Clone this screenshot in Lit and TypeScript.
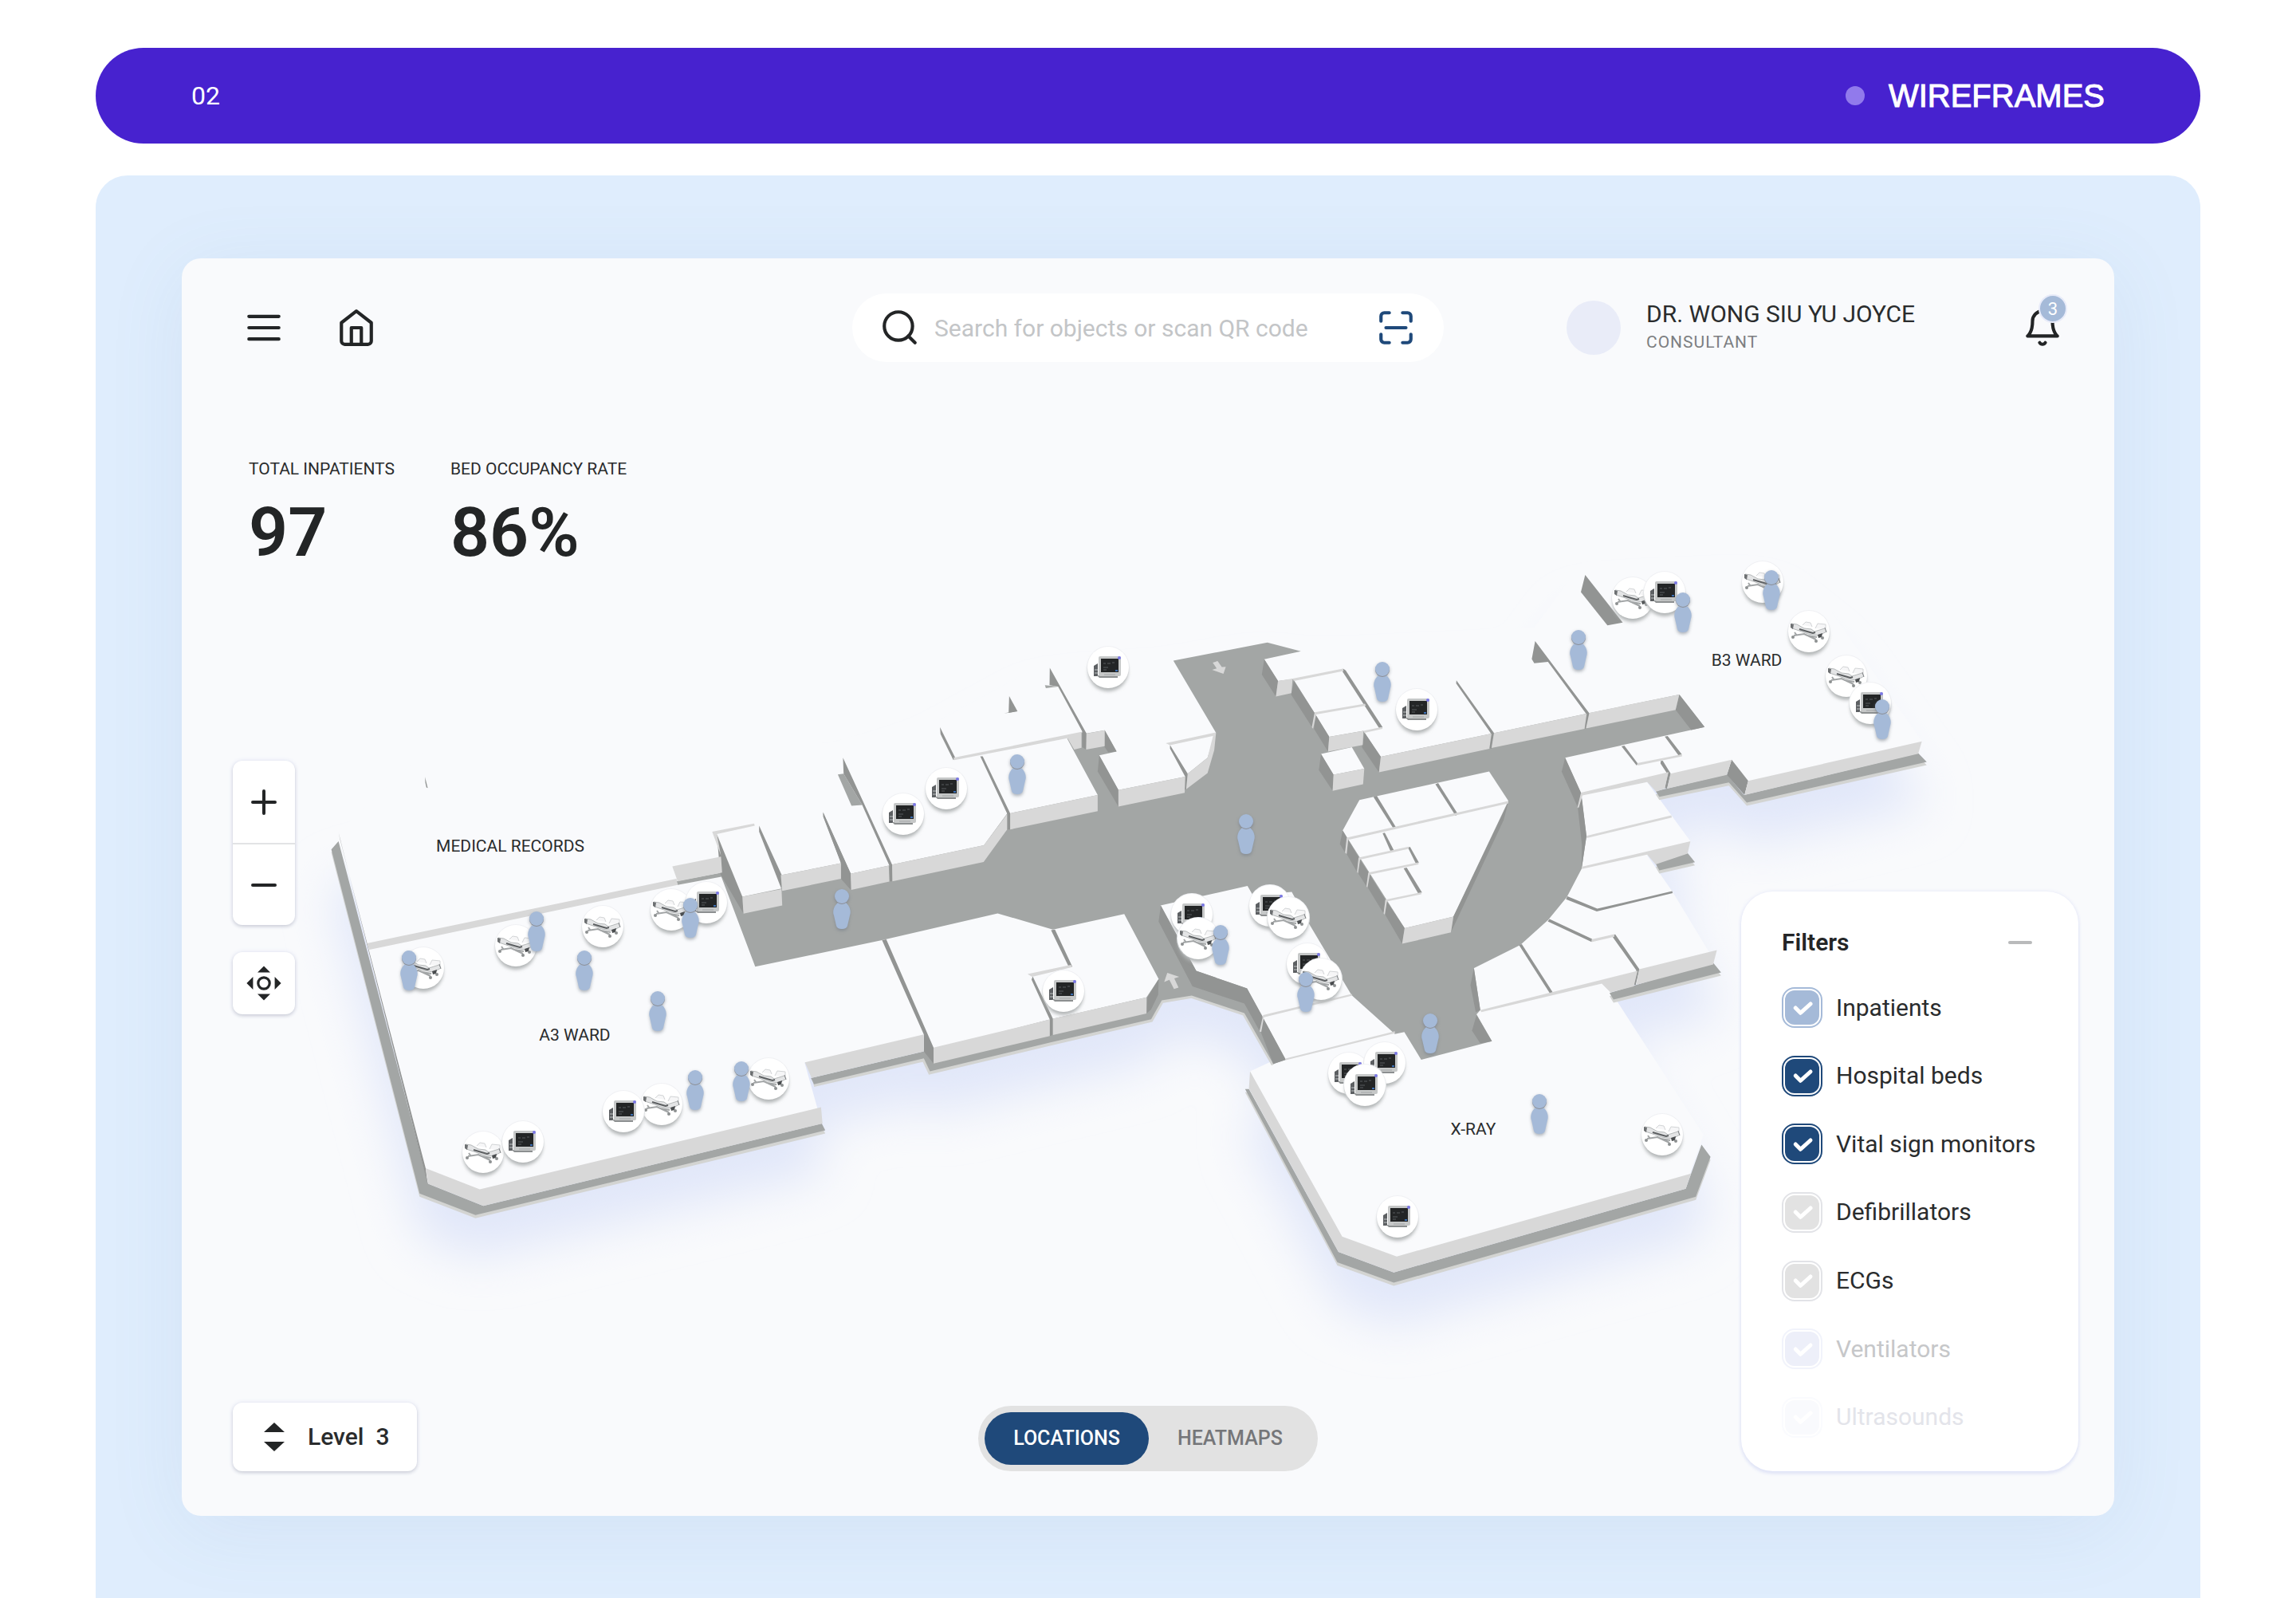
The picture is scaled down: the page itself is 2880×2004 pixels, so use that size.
import { LitElement, html, svg, css } from "lit";
import { customElement, property, state } from "lit/decorators.js";
import { classMap } from "lit/directives/class-map.js";

type Pts = number[];

/* Each part of the building is plotted on its own survey sheet; a sheet
   converts its local points to floor-plan coordinates. */
const sheet =
  (ox: number, oy: number, sx: number, sy: number) =>
  (...p: Pts): string => {
    const out: string[] = [];
    for (let i = 0; i < p.length; i += 2) {
      out.push(`${(ox + p[i] * sx).toFixed(1)},${(oy + p[i + 1] * sy).toFixed(1)}`);
    }
    return out.join(" ") + " ";
  };

const W = sheet(400, 900, 0.4464, 0.4082);
const N = sheet(1000, 780, 0.38265, 0.38265);
const M = sheet(1450, 680, 0.38265, 0.35714);
const E = sheet(1900, 680, 0.35714, 0.40816);
const S = sheet(1450, 1080, 0.47194, 0.35714);

const FOOTPRINT =
  W(35, 405, 283, 1462, 440, 1528, 1423, 1268, 1390, 1127) +
  N(415, 1432, 435, 1475, 830, 1380, 1160, 1302, 1195, 1240, 1300, 1220, 1465, 1278) +
  S(312, 712, 237, 800, 482, 1408, 632, 1480, 1435, 1178, 1474, 1040, 1222, 487, 1500, 390) +
  E(600, 1080, 508, 1008, 632, 983, 508, 780, 752, 738, 815, 802, 1447, 675, 1100, 250, 850, 75, 240, 100) +
  M(1240, 345, 470, 383, 365, 352, 58, 413) +
  N(828, 150, 470, 345, 150, 445) +
  W(900, 130, 57, 380);

const TOPS =
  W(55, 352, 305, 1430, 452, 1490, 1411, 1240, 1365, 1060) +
  N(415, 1400, 447, 1440, 830, 1350, 1160, 1270, 1195, 1200, 1300, 1200, 1465, 1240) +
  S(312, 700, 250, 738, 490, 1360, 632, 1430, 1408, 1140, 1455, 960, 1210, 460, 1482, 345) +
  E(555, 1075, 465, 962, 607, 952, 617, 919, 465, 737, 745, 700, 807, 770, 1417, 645, 1430, 612, 1100, 200, 850, 40, 240, 60) +
  M(1240, 300, 470, 340, 365, 340, 58, 390) +
  N(828, 130, 470, 320, 150, 380) +
  W(1455, 80, 900, 60, 300, 100);

const CORRIDOR =
  W(1226, 765, 1128, 480, 1190, 550, 1300, 525, 1298, 484, 1467, 447) +
  N(143, 788, 175, 825, 300, 798, 311, 795, 612, 732, 688, 628, 698, 627, 985, 567, 885, 382, 932, 362,
    948, 365, 1008, 355, 1047, 425, 990, 437, 1053, 551, 1272, 507, 1280, 497, 1345, 445, 1372, 362, 1233, 127) +
  M(365, 352, 475, 383, 355, 411, 400, 487, 450, 480, 520, 600, 568, 683, 680, 662, 737, 753, 1100, 672, 1420, 600) +
  E(578, 468, 667, 568, 177, 662, 233, 772, 252, 903, 235, 1003, 183, 1090, 118, 1160, 20, 1237) +
  M(1043, 1495) +
  S(845, 375, 862, 523, 852, 538, 893, 632, 705, 697, 660, 600, 635, 607, 520, 470) +
  M(505, 1345, 445, 1228, 318, 1240, 300, 1207, 15, 1275) +
  S(107, 385, 242, 447, 283, 547, 345, 697, 312, 712, 235, 533, 95, 472) +
  N(1195, 1240, 1160, 1302, 830, 1378, 435, 1473, 415, 1430, 55, 1515, 45, 1495, 415, 1407, 447, 1400, 828, 1303,
    1145, 1230, 1185, 1170, 1072, 957, 838, 1008, 657, 955, 278, 1043);

const CORRIDOR_RIM =
  N(54, 1517, 415, 1434, 435, 1476, 830, 1382, 1160, 1305, 1195, 1243) + S(95, 474, 235, 536, 312, 714);

const SLABS = [
  W(35, 405, 55, 380, 307, 1432, 462, 1500, 1413, 1247, 1423, 1268, 440, 1528, 283, 1462),
  S(237, 800, 247, 800, 485, 1372, 632, 1444, 1408, 1150, 1450, 995, 1474, 1038, 1435, 1178, 632, 1480, 482, 1408),
  E(333, 1385, 695, 1290, 725, 1322, 347, 1405),
  E(495, 988, 607, 955, 633, 983, 508, 1008),
  E(495, 765, 745, 713, 805, 777, 1417, 648, 1447, 675, 815, 800, 752, 738, 508, 782),
];

const FLOOR = [
  N(133, 500, 152, 497, 213, 600, 178, 602),
  N(812, 207, 855, 212, 815, 217),
  N(678, 300, 695, 295, 722, 293),
  W(1005, 502, 1132, 476, 1134, 488, 1008, 514),
];

const ISLANDS = [
  M(667, 905, 1092, 805, 1155, 908, 975, 1315, 815, 1355, 612, 1012),
  M(541, 743, 642, 720, 683, 795, 582, 816),
];

const SHADED = [
  W(55, 352, 305, 1430, 300, 1384, 60, 376),
  W(298, 182, 306, 216, 302, 214, 299, 200),
  W(1118, 358, 1190, 550, 1193, 602, 1128, 480),
  W(1237, 332, 1300, 482, 1300, 527, 1237, 350),
  W(1417, 290, 1495, 480, 1495, 530, 1467, 495, 1467, 447, 1417, 304),
  N(150, 445, 311, 795, 312, 850, 302, 850, 302, 798, 213, 600, 152, 497),
  N(85, 625, 175, 825, 177, 878, 145, 842, 143, 788, 87, 640),
  N(468, 345, 518, 445, 512, 453, 470, 368),
  N(600, 440, 608, 440, 698, 627, 698, 680, 688, 680, 688, 628),
  N(828, 150, 948, 365, 947, 418, 934, 410, 934, 358, 855, 212, 827, 207),
  N(695, 243, 722, 293, 693, 298),
  N(1008, 355, 1047, 424, 1020, 428, 1006, 407),
  N(990, 437, 1053, 551, 1053, 605, 985, 490),
  N(1222, 403, 1280, 497, 1275, 548, 1270, 550, 1272, 507, 1222, 415),
  N(278, 1043, 292, 1040, 447, 1395, 447, 1447, 415, 1407, 415, 1352),
  N(832, 1010, 845, 1008, 902, 1130, 890, 1130),
  N(768, 1172, 772, 1162, 838, 1300, 838, 1353, 828, 1357, 828, 1303),
  N(1185, 1170, 1183, 1222, 1160, 1270, 1145, 1283, 1148, 1230),
  S(13, 155, 107, 385, 242, 447, 283, 545, 276, 598, 235, 500, 97, 440, 7, 212),
  S(285, 550, 345, 697, 312, 712, 278, 598),
  M(355, 411, 400, 487, 393, 542, 347, 465),
  M(452, 487, 520, 600, 515, 655, 443, 535),
  M(524, 607, 568, 683, 564, 735, 518, 655),
  M(613, 444, 622, 450, 743, 650, 733, 655, 612, 455),
  M(684, 669, 737, 753, 731, 808, 675, 720),
  M(541, 743, 582, 816, 579, 873, 534, 800),
  M(985, 485, 1108, 670, 1100, 725, 1092, 722, 1097, 670, 984, 496),
  M(1243, 347, 1420, 600, 1412, 655, 1403, 655, 1410, 602, 1285, 420, 1240, 425, 1232, 410),
  M(1407, 115, 1530, 282, 1480, 292, 1393, 175),
  E(578, 468, 667, 568, 620, 577, 565, 515),
  E(177, 662, 233, 770, 222, 815, 165, 705),
  E(235, 780, 252, 903, 235, 1003, 236, 930, 222, 820),
  E(375, 627, 385, 625, 432, 680, 428, 686),
  E(527, 597, 537, 595, 587, 652, 575, 655),
  E(513, 672, 520, 671, 548, 711, 535, 757, 527, 755, 537, 713, 512, 680),
  E(762, 668, 820, 733, 807, 777, 745, 715),
  M(612, 1012, 626, 1038, 620, 1090, 603, 1060),
  M(630, 1045, 665, 1107, 659, 1158, 625, 1095),
  M(669, 1115, 697, 1160, 690, 1208, 664, 1165),
  M(701, 1168, 752, 1255, 746, 1303, 694, 1212),
  M(757, 1262, 815, 1355, 807, 1410, 751, 1308),
  M(713, 895, 724, 890, 788, 1003, 780, 1008),
  M(916, 850, 925, 846, 990, 955, 982, 960),
  M(743, 1022, 750, 1020, 780, 1082, 770, 1087),
  M(826, 1072, 833, 1070, 862, 1125, 852, 1128),
  M(812, 1145, 822, 1142, 872, 1230, 860, 1234),
  M(1155, 912, 1140, 975, 967, 1370, 975, 1315),
  E(185, 1088, 290, 1126, 553, 1072, 555, 1078, 288, 1134, 180, 1097),
  E(122, 1158, 272, 1219, 270, 1228, 116, 1165),
  E(345, 1207, 353, 1205, 438, 1312, 425, 1360, 415, 1360, 427, 1315, 345, 1214),
  E(15, 1238, 25, 1235, 135, 1385, 125, 1388),
  S(845, 375, 862, 523, 850, 530, 836, 435),
  S(852, 540, 893, 632, 862, 640, 840, 595),
];

const LIT_FACES = [
  W(135, 693, 1005, 495, 1008, 514, 142, 713),
  W(993, 457, 1130, 427, 1133, 476, 1008, 503),
  W(1105, 350, 1223, 325, 1225, 332, 1118, 358, 1130, 424),
  W(1190, 550, 1300, 527, 1302, 577, 1193, 602),
  W(1298, 484, 1467, 447, 1467, 495, 1302, 532),
  W(300, 1384, 452, 1449, 1411, 1197, 1415, 1247, 462, 1500, 307, 1432),
  N(175, 825, 300, 798, 302, 851, 177, 878),
  N(311, 795, 612, 732, 688, 630, 688, 680, 611, 787, 312, 850),
  N(698, 627, 985, 567, 985, 620, 698, 680),
  N(512, 445, 932, 360, 932, 412, 908, 418, 886, 381, 515, 453),
  N(948, 366, 1008, 355, 1008, 407, 947, 418),
  N(1053, 551, 1272, 507, 1270, 560, 1053, 605),
  N(1208, 397, 1372, 362, 1365, 373, 1222, 404),
  N(1280, 497, 1345, 445, 1363, 373, 1373, 362, 1367, 420, 1345, 495, 1275, 548),
  N(25, 1443, 415, 1352, 415, 1407, 47, 1494),
  N(447, 1395, 828, 1303, 828, 1357, 447, 1447),
  N(838, 1300, 1145, 1230, 1145, 1283, 838, 1354),
  N(755, 1154, 897, 1124, 902, 1131, 770, 1163),
  M(400, 487, 448, 479, 444, 530, 393, 542),
  M(448, 479, 613, 444, 615, 452, 452, 487),
  M(520, 597, 685, 567, 688, 574, 525, 605, 515, 655, 511, 650),
  M(568, 683, 680, 662, 678, 712, 640, 720, 564, 735),
  M(680, 662, 740, 649, 743, 655, 684, 669),
  M(582, 816, 683, 795, 679, 850, 579, 873),
  M(737, 753, 1100, 672, 1093, 725, 731, 808),
  M(1108, 670, 1412, 602, 1405, 655, 1100, 722),
  E(262, 524, 578, 468, 565, 515, 250, 572),
  M(625, 1037, 1155, 909, 1155, 917, 630, 1045, 625, 1095, 620, 1090),
  M(664, 1107, 828, 1069, 828, 1077, 669, 1114, 662, 1162, 659, 1158),
  M(696, 1160, 860, 1124, 861, 1131, 701, 1167, 693, 1212, 690, 1208),
  M(752, 1255, 870, 1229, 870, 1236, 757, 1261, 750, 1308, 746, 1303),
  M(815, 1355, 975, 1315, 967, 1370, 807, 1410),
  E(233, 769, 540, 706, 527, 757, 497, 766, 465, 737, 238, 778, 225, 815, 220, 815),
  E(252, 902, 550, 839, 552, 846, 253, 909),
  E(235, 997, 617, 919, 607, 957, 495, 990, 465, 960, 236, 1004),
  E(547, 711, 762, 668, 745, 715, 535, 757),
  E(820, 733, 1430, 612, 1417, 650, 807, 777),
  E(430, 679, 587, 652, 588, 658, 432, 686),
  E(270, 1220, 350, 1204, 350, 1212, 272, 1228),
  E(437, 1312, 710, 1253, 697, 1297, 427, 1360),
  S(862, 523, 1280, 385, 1270, 440, 1208, 461, 1185, 430, 865, 530),
  S(285, 540, 520, 466, 522, 472, 287, 548, 280, 600, 275, 598),
  S(344, 693, 635, 597, 635, 604, 345, 699),
  S(250, 738, 495, 1318, 640, 1388, 1422, 1097, 1408, 1150, 632, 1444, 485, 1372, 247, 798),
  N(1362, 133, 1378, 128, 1392, 148, 1405, 147, 1397, 170, 1360, 157, 1375, 152),
  N(1213, 1150, 1252, 1163, 1236, 1168, 1250, 1198, 1235, 1203, 1220, 1173, 1203, 1180),
];

type Kind = "inpatients" | "beds" | "monitors";

/* Marker x / y is the centre of the disc, or the top of the head for people. */
const MARKERS: [Kind, number, number][] = [
  ["beds", 531, 1214], ["inpatients", 513, 1192],
  ["beds", 647, 1186], ["inpatients", 673, 1143],
  ["beds", 756, 1162], ["inpatients", 733, 1192],
  ["beds", 842, 1141], ["monitors", 886, 1132], ["inpatients", 866, 1126],
  ["inpatients", 825, 1243],
  ["beds", 830, 1385], ["monitors", 782, 1394],
  ["beds", 606, 1445], ["monitors", 656, 1432],
  ["beds", 964, 1353], ["inpatients", 930, 1331], ["inpatients", 872, 1342],
  ["inpatients", 1056, 1115],
  ["monitors", 1390, 837], ["monitors", 1187, 989], ["monitors", 1133, 1021],
  ["inpatients", 1276, 946], ["inpatients", 1563, 1021], ["monitors", 1334, 1243],
  ["monitors", 1495, 1147], ["beds", 1503, 1177], ["inpatients", 1531, 1160],
  ["monitors", 1593, 1136], ["beds", 1616, 1151],
  ["monitors", 1640, 1209], ["beds", 1657, 1228], ["inpatients", 1638, 1219],
  ["inpatients", 1734, 830], ["monitors", 1777, 890], ["inpatients", 1980, 790],
  ["beds", 2048, 750], ["monitors", 2088, 743], ["inpatients", 2111, 743],
  ["beds", 2211, 730], ["inpatients", 2222, 715],
  ["beds", 2269, 792], ["beds", 2316, 848], ["monitors", 2346, 882], ["inpatients", 2361, 877],
  ["monitors", 1692, 1346], ["monitors", 1737, 1333], ["monitors", 1712, 1361],
  ["inpatients", 1794, 1271], ["inpatients", 1931, 1372],
  ["beds", 2085, 1423], ["monitors", 1753, 1526],
];

const LABELS: [string, number, number][] = [
  ["MEDICAL RECORDS", 640, 1068],
  ["A3 WARD", 721, 1305],
  ["B3 WARD", 2191, 835],
  ["X-RAY", 1848, 1423],
];

const disc = svg`
  <circle r="27" fill="#f0f1f4"></circle>
  <circle cy="5" r="25" fill="#b4b7b8" filter="url(#soft)"></circle>
  <circle r="26" fill="#fff"></circle>`;

const glyphs = {
  monitors: svg`${disc}
    <path d="M-18-2l5-3v16h-5z" fill="#5d6063"></path>
    <path d="M-17 3h4M-17 7h4" stroke="#bfc2c4" stroke-width="1"></path>
    <path d="M-14 10h26v3h-23z" fill="#8c8f90"></path>
    <rect x="-12" y="-14" width="28" height="25" rx="2" fill="#c6c8c8"></rect>
    <rect x="-9" y="-11" width="22" height="17" fill="#232526"></rect>
    <path d="M-6-5h3M-1-5h4M5-6h3M-6 0h6M-6 3h4" stroke="#585d5f" stroke-width="1"></path>
    <path d="M-5 9h14" stroke="#a3a6a7" stroke-width="1"></path>
    <circle cx="14" cy="-12" r="2" fill="#7b78e6"></circle>
    <rect x="9" y="3" width="3" height="2" fill="#3b6fb5"></rect>`,
  beds: svg`${disc}
    <path d="M-8-8l4-4 6 1 2 5M8-4l3-6 10 1 0 6" fill="#f6f6f7" stroke="#d2d4d6" stroke-width="1"></path>
    <path d="M-22-10l7 1 9 5 9 1 4 3 13-4 2 4-9 5-14-2-11-4-9-3z" fill="#e4e5e6" stroke="#b5b8b9" stroke-width="1"></path>
    <path d="M-23-10l4 1-1 6-3-2z" fill="#6d7072"></path>
    <path d="M-12-3l10 3 7 2 3-1" fill="none" stroke="#5c5f61" stroke-width="2"></path>
    <path d="M-18 1l3 4M-19 5l13-2 15 7M-2 5l12 2" fill="none" stroke="#a2a5a6" stroke-width="2"></path>
    <path d="M11 4l6-2-1 5-4 1z" fill="#4a4d4f"></path>
    <path d="M20-5l2 6" stroke="#85888a" stroke-width="1"></path>
    <g fill="#8d9091"><circle cx="-20" cy="7" r="2"></circle><circle cx="9" cy="12" r="2"></circle><circle cx="17" cy="8" r="2"></circle></g>`,
  inpatients: svg`
    <g fill="#6f7985" opacity=".6" filter="url(#soft)">
      <circle cy="11" r="9"></circle>
      <path d="M-5 19C-10 23-11 30-9 36L-7 48Q-6 52 0 52Q6 52 7 48L9 36C11 30 10 23 5 19Z"></path>
    </g>
    <path d="M-5 17C-10 21-12 28-10 33L-7 46Q-6 50 0 50Q6 50 7 46L10 33C12 28 10 21 5 17Z" fill="#a5bad8"></path>
    <circle cy="10" r="9" fill="#8b8f96"></circle>
    <circle cy="9" r="9" fill="#a5bad8"></circle>`,
};

const FILTERS = [
  { id: "inpatients", label: "Inpatients", tone: "sky" },
  { id: "beds", label: "Hospital beds", tone: "navy" },
  { id: "monitors", label: "Vital sign monitors", tone: "navy" },
  { id: "defibrillators", label: "Defibrillators", tone: "" },
  { id: "ecgs", label: "ECGs", tone: "" },
  { id: "ventilators", label: "Ventilators", tone: "fade" },
  { id: "ultrasounds", label: "Ultrasounds", tone: "fainter" },
];

@customElement("floor-map")
class FloorMap extends LitElement {
  @property({ attribute: false }) shown = new Set<string>();

  static styles = css`
    :host { display: block; }
    .plan { display: block; width: 100%; height: auto; }
    .label { font: 21px Roboto, "Liberation Sans", sans-serif; fill: #2a2c2d; text-anchor: middle; }
    .floor { fill: #a3a6a5; }
    .rim { fill: #d3d4d2; }
    .rim-line { fill: none; stroke: #d3d4d2; stroke-width: 5; }
    .top { fill: #f9fafc; }
    .shaded { fill: #929493; }
    .lit { fill: #d8d8d8; }
  `;

  render() {
    const poly = (cls: string) => (p: string) => svg`<polygon class=${cls} points=${p}></polygon>`;
    return html`
      <svg class="plan" viewBox="228 324 2424 1577" role="img" aria-label="Floor plan of level 3">
        <defs>
          <filter id="haze" x="-10%" y="-20%" width="120%" height="150%"><feGaussianBlur stdDeviation="30"></feGaussianBlur></filter>
          <filter id="soft" x="-30%" y="-30%" width="160%" height="160%"><feGaussianBlur stdDeviation="2"></feGaussianBlur></filter>
        </defs>
        <polygon points=${FOOTPRINT} transform="translate(0 54)" fill="#e1e7f9" filter="url(#haze)"></polygon>
        <polygon class="top" points=${TOPS}></polygon>
        <g transform="translate(0 4)">${SLABS.map(poly("rim"))}</g>
        <polyline class="rim-line" points=${CORRIDOR_RIM}></polyline>
        ${SLABS.map(poly("floor"))}
        ${FLOOR.map(poly("floor"))}
        <polygon class="floor" points=${CORRIDOR}></polygon>
        ${ISLANDS.map(poly("top"))}
        ${SHADED.map(poly("shaded"))}
        ${LIT_FACES.map(poly("lit"))}
        ${LABELS.map(([t, x, y]) => svg`<text class="label" x=${x} y=${y}>${t}</text>`)}
        ${MARKERS.filter(([k]) => this.shown.has(k)).map(
          ([k, x, y]) => svg`<g transform="translate(${x} ${y})">${glyphs[k]}</g>`
        )}
      </svg>
    `;
  }
}

const icon = (body: unknown, cls = "") => html`
  <svg class="icon ${cls}" viewBox="0 0 24 24" aria-hidden="true">${body}</svg>
`;

@customElement("app-root")
class AppRoot extends LitElement {
  @state() private shown = new Set<string>(["inpatients", "beds", "monitors"]);
  @state() private view = "locations";

  static styles = css`
    :host {
      display: flex;
      flex-direction: column;
      gap: 40px;
      box-sizing: border-box;
      min-height: 100vh;
      padding: 60px 120px 0;
      background: #fff;
      color: #2a2c2d;
      font: 30px/36px Roboto, "Liberation Sans", sans-serif;
    }
    button, input, select { font: inherit; color: inherit; border: 0; margin: 0; padding: 0; background: none; }
    button, select { cursor: pointer; }
    h1, h2, p, dl, dd, ul { margin: 0; padding: 0; }

    .banner {
      display: flex;
      align-items: center;
      justify-content: space-between;
      height: 120px;
      padding: 0 120px;
      border-radius: 60px;
      background: #4722cf;
      color: #fff;
    }
    .number { font-size: 32px; }
    .title {
      display: flex;
      align-items: center;
      gap: 30px;
      font: 40px/48px "Liberation Sans", Arial, sans-serif;
      -webkit-text-stroke: 1px #fff;
    }
    .dot { width: 24px; height: 24px; border-radius: 50%; background: #917aec; }

    .stage {
      flex: 1;
      padding: 104px 108px 103px;
      border-radius: 40px 40px 0 0;
      background: #dfedfd;
    }
    .card {
      display: grid;
      border-radius: 24px;
      background: #f9fafc;
      box-shadow: 0 16px 100px rgba(90, 130, 170, 0.09);
      overflow: clip;
    }
    .map, .overlay { grid-area: 1 / 1; }
    .overlay { display: flex; flex-direction: column; z-index: 1; }

    .icon {
      display: block;
      width: 50px;
      height: 50px;
      fill: none;
      stroke: #232526;
      stroke-width: 2;
      stroke-linecap: round;
      stroke-linejoin: round;
    }
    .icon.scan { stroke: #1f497a; }

    .top { display: grid; grid-template-columns: minmax(0, 1fr) auto minmax(0, 1fr); align-items: center; padding-top: 44px; }
    .nav { display: flex; gap: 66px; padding-left: 78px; }
    .search {
      display: flex;
      align-items: center;
      gap: 18px;
      box-sizing: border-box;
      width: 742px;
      height: 86px;
      padding: 0 35px;
      border-radius: 43px;
      background: #fff;
    }
    .search input { flex: 1; min-width: 0; height: 60px; outline: none; }
    .search input::placeholder { color: #c3c5c7; opacity: 1; }
    .user { display: flex; align-items: center; padding: 0 65px 0 154px; }
    .avatar { width: 68px; height: 68px; border-radius: 50%; background: #e9ecf8; }
    .who { margin-left: 32px; white-space: nowrap; }
    .role { font-size: 21px; line-height: 34px; color: #7c7e81; letter-spacing: 1px; }
    .bell { position: relative; margin-left: auto; }
    .badge {
      position: absolute;
      left: 20px;
      top: -17px;
      width: 32px;
      height: 32px;
      border: 2px solid #e8ebf9;
      border-radius: 50%;
      background: #a5bad8;
      color: #fff;
      font-size: 22px;
      line-height: 34px;
      text-align: center;
    }

    .stats { display: flex; gap: 70px; padding: 120px 0 0 84px; }
    .stats dt { font-size: 21px; line-height: 28px; }
    .stats dd { margin-top: 16px; font-size: 86px; line-height: 100px; font-weight: 600; color: #232526; }

    .body {
      flex: 1;
      display: grid;
      grid-template-columns: minmax(0, 1fr) auto minmax(0, 1fr);
      padding-bottom: 56px;
    }
    .left { display: flex; flex-direction: column; align-items: flex-start; gap: 34px; padding: 236px 0 0 64px; }
    .panel { background: #fff; border-radius: 12px; box-shadow: 0 2px 4px rgba(60, 64, 80, 0.2), 0 0 6px #e6e9f8; }
    .zoom { display: flex; flex-direction: column; }
    .zoom button, .centre { display: grid; place-items: center; width: 78px; height: 103px; }
    .zoom button + button { border-top: 2px solid #e2e3e5; }
    .centre { height: 78px; }
    .icon.mid { width: 48px; height: 48px; }
    .icon.solid { fill: #232526; stroke: none; }
    .icon.solid circle { fill: none; stroke: #232526; }
    .level { display: grid; align-items: center; margin-top: auto; height: 86px; font-weight: 500; }
    .level select { grid-area: 1 / 1; appearance: none; height: 86px; padding: 0 34px 0 94px; border-radius: 12px; }
    .level .icon { grid-area: 1 / 1; margin-left: 28px; pointer-events: none; }

    .switch {
      align-self: end;
      display: flex;
      box-sizing: border-box;
      height: 82px;
      padding: 8px;
      border-radius: 41px;
      background: #e2e2e2;
      font-size: 25px;
      font-weight: 500;
    }
    .switch button { padding: 0 36px; border-radius: 33px; color: #757679; }
    .switch .on { background: #1f497a; color: #fff; }

    .right { display: flex; flex-direction: column; align-items: flex-end; justify-content: flex-end; padding-right: 45px; }
    .filters {
      display: flex;
      flex-direction: column;
      box-sizing: border-box;
      width: 423px;
      min-height: 727px;
      padding: 46px 51px 42px;
      border-radius: 40px;
      background: #fff;
      box-shadow: 0 3px 4px #dfe3f6, 0 0 5px #e6e9f8;
    }
    .head { display: flex; align-items: center; justify-content: space-between; margin-bottom: 38px; }
    .head h2 { font-size: 30px; line-height: 36px; font-weight: 600; color: #232526; }
    .collapse { display: grid; place-items: center; width: 44px; height: 36px; }
    .dash { width: 30px; height: 4px; border-radius: 2px; background: #b9babb; }
    .list { flex: 1; display: flex; flex-direction: column; justify-content: space-between; list-style: none; }
    .row { display: flex; align-items: center; gap: 17px; white-space: nowrap; --tone: #e2e2e2; --ring: #e2e3e7; }
    .row.sky { --tone: #a5bad8; --ring: #a5bad8; }
    .row.navy { --tone: #1f497a; --ring: #1f497a; }
    .row.fade { --tone: #edeff9; --ring: #f1f3fb; color: #c6c7c9; }
    .row.fainter { --tone: #f9fafd; --ring: #fafbfe; color: #e3e4ea; }
    .box { display: grid; place-items: center; width: 51px; height: 51px; }
    .box input {
      grid-area: 1 / 1;
      appearance: none;
      box-sizing: border-box;
      width: 51px;
      height: 51px;
      border: 2px solid var(--ring);
      border-radius: 16px;
      background: #fff;
    }
    .fill { grid-area: 1 / 1; width: 43px; height: 43px; border-radius: 12px; background: var(--tone); pointer-events: none; }
    .icon.tick { grid-area: 1 / 1; width: 30px; height: 30px; stroke: #fff; stroke-width: 4; pointer-events: none; }
  `;

  private toggle(id: string) {
    const next = new Set(this.shown);
    next.has(id) ? next.delete(id) : next.add(id);
    this.shown = next;
  }

  render() {
    return html`
      <header class="banner">
        <span class="number">02</span>
        <h1 class="title"><span class="dot"></span>WIREFRAMES</h1>
      </header>
      <main class="stage">
        <div class="card">
          <floor-map class="map" .shown=${this.shown}></floor-map>
          <div class="overlay">
            <div class="top">
              <nav class="nav">
                <button aria-label="Menu">${icon(svg`<path d="M3 5.2h18M3 12h18M3 18.8h18"></path>`)}</button>
                <button aria-label="Home">
                  ${icon(svg`<path d="M3 9l9-7 9 7v11a2 2 0 0 1-2 2H5a2 2 0 0 1-2-2z"></path><path d="M9 22V12h6v10"></path>`)}
                </button>
              </nav>
              <form class="search" role="search" @submit=${(e: Event) => e.preventDefault()}>
                ${icon(svg`<circle cx="11" cy="11" r="8.5"></circle><path d="M21 21l-4-4"></path>`)}
                <input type="text" aria-label="Search" placeholder="Search for objects or scan QR code" />
                <button type="button" aria-label="Scan QR code">
                  ${icon(svg`<path d="M3 8V5a2 2 0 0 1 2-2h3M16 3h3a2 2 0 0 1 2 2v3M21 16v3a2 2 0 0 1-2 2h-3M8 21H5a2 2 0 0 1-2-2v-3M6 12h12"></path>`, "scan")}
                </button>
              </form>
              <div class="user">
                <span class="avatar"></span>
                <div class="who">
                  <p>DR. WONG SIU YU JOYCE</p>
                  <p class="role">CONSULTANT</p>
                </div>
                <button class="bell" aria-label="Notifications">
                  ${icon(svg`<path d="M18 8A6 6 0 0 0 6 8c0 7-3 9-3 9h18s-3-2-3-9"></path><path d="M13.7 21a2 2 0 0 1-3.4 0"></path>`)}
                  <span class="badge">3</span>
                </button>
              </div>
            </div>
            <dl class="stats">
              <div><dt>TOTAL INPATIENTS</dt><dd>97</dd></div>
              <div><dt>BED OCCUPANCY RATE</dt><dd>86%</dd></div>
            </dl>
            <div class="body">
              <div class="left">
                <div class="zoom panel">
                  <button aria-label="Zoom in">${icon(svg`<path d="M5 12h14M12 5v14"></path>`, "mid")}</button>
                  <button aria-label="Zoom out">${icon(svg`<path d="M5 12h14"></path>`, "mid")}</button>
                </div>
                <button class="centre panel" aria-label="Centre the map">
                  ${icon(
                    svg`<circle cx="12" cy="12" r="3.6" stroke-width="1.6"></circle><path d="M12 1.2l4 4H8zM12 22.8l-4-4h8zM1.2 12l4-4v8zM22.8 12l-4 4V8z"></path>`,
                    "mid solid"
                  )}
                </button>
                <div class="level panel">
                  <select aria-label="Level">
                    <option>Level&nbsp; 3</option>
                    <option>Level&nbsp; 2</option>
                    <option>Level&nbsp; 1</option>
                  </select>
                  ${icon(svg`<path d="M12 3l6.5 6h-13zM12 21l-6.5-6h13z"></path>`, "mid solid")}
                </div>
              </div>
              <div class="switch" role="group" aria-label="Map view">
                ${["locations", "heatmaps"].map(
                  (v) => html`<button
                    class=${classMap({ on: this.view === v })}
                    aria-pressed=${this.view === v}
                    @click=${() => (this.view = v)}
                  >${v.toUpperCase()}</button>`
                )}
              </div>
              <div class="right">
                <section class="filters">
                  <div class="head">
                    <h2>Filters</h2>
                    <button class="collapse" aria-label="Collapse filters"><span class="dash"></span></button>
                  </div>
                  <ul class="list">
                    ${FILTERS.map(
                      (f) => html`<li>
                        <label class="row ${f.tone}">
                          <span class="box">
                            <input type="checkbox" .checked=${this.shown.has(f.id)} @change=${() => this.toggle(f.id)} />
                            <span class="fill"></span>
                            ${icon(svg`<path d="M5 12l5 5 10-9"></path>`, "tick")}
                          </span>
                          ${f.label}
                        </label>
                      </li>`
                    )}
                  </ul>
                </section>
              </div>
            </div>
          </div>
        </div>
      </main>
    `;
  }
}
